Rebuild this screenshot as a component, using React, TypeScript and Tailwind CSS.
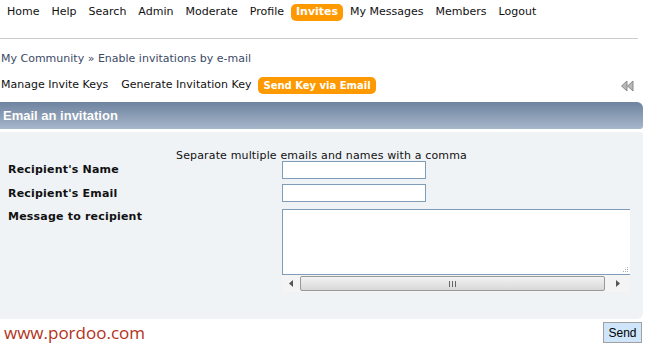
import React from "react";

const navItems = ["Home", "Help", "Search", "Admin", "Moderate", "Profile", "Invites", "My Messages", "Members", "Logout"];

export default function App() {
  return (
    <div className="w-[645px] h-[355px] bg-white overflow-hidden text-[11px] text-[#111]" style={{ fontFamily: '"DejaVu Sans", Verdana, sans-serif' }}>
      {/* Top nav */}
      <div className="flex items-center h-[23px] pl-[1px] pt-[1px]">
        {navItems.map((n) =>
          n === "Invites" ? (
            <span key={n} className="mx-[1px] px-[5px] h-[17px] flex items-center rounded-[5px] bg-[#ff9900] text-white font-bold">{n}</span>
          ) : (
            <span key={n} className="px-[6px]">{n}</span>
          )
        )}
      </div>
      <div className="mt-[15px] ml-0 w-[638px] h-px bg-[#cccccc]" />
      {/* breadcrumb */}
      <div className="mt-[13px] pl-[1px] text-[#3b4a66] h-[14px] leading-[14px]">
        My Community <span>»</span> Enable invitations by e-mail
      </div>
      {/* sub nav */}
      <div className="mt-[11px] flex items-center h-[17px] pr-[11px]">
        <span className="pl-[1px] pr-[7px]">Manage Invite Keys</span>
        <span className="px-[6px]">Generate Invitation Key</span>
        <span className="ml-[1px] px-[5px] h-[17px] flex items-center rounded-[5px] bg-[#ff9900] text-white font-bold text-[10px]">Send Key via Email</span>
        <div className="flex-1" />
        <svg width="14" height="12" viewBox="0 0 14 12">
          <path d="M7 1 L1.5 6 L7 11 Z" fill="#b8b8b8" stroke="#8a8a8a" strokeWidth="1" />
          <path d="M13 1 L7.5 6 L13 11 Z" fill="#b8b8b8" stroke="#8a8a8a" strokeWidth="1" />
        </svg>
      </div>
      {/* header */}
      <div className="mt-[8px] w-[643px] h-[27px] rounded-tr-[6px] rounded-br-[3px] bg-gradient-to-b from-[#6e83a0] to-[#a8b7ca] flex items-center pl-[3px]">
        <span className="text-white font-bold text-[13px]" style={{ fontFamily: '"Liberation Sans", Arial, sans-serif', textShadow: "0 0 1px #8090a8" }}>Email an invitation</span>
      </div>
      {/* body */}
      <div className="mt-[3px] w-[643px] h-[187px] bg-[#eff3f6] rounded-br-[6px] rounded-tr-[3px] pt-[17px]">
        <div className="text-center leading-[14px] -mt-[0px] tracking-[0.15px]">Separate multiple emails and names with a comma</div>
        <div className="flex -mt-[2px]">
          <div className="w-[282px] pl-[8px] font-bold tracking-[0.2px]">
            <div className="h-[14px] mt-[2px] leading-[14px]">Recipient's Name</div>
            <div className="h-[14px] mt-[10px] leading-[14px]">Recipient's Email</div>
            <div className="h-[14px] mt-[9px] leading-[14px]">Message to recipient</div>
          </div>
          <div className="flex flex-col">
            <div className="w-[144px] h-[18px] bg-white border border-[#7f9db9]" />
            <div className="w-[144px] h-[18px] mt-[5px] bg-white border border-[#7f9db9]" />
            <div className="mt-[7px] w-[348px] h-[66px] bg-white border border-r-0 border-[#7f9db9] relative">
              <svg className="absolute right-[1px] bottom-[1px]" width="6" height="6" viewBox="0 0 6 6">
                <rect x="4" y="0" width="1" height="1" fill="#aaa" />
                <rect x="2" y="2" width="1" height="1" fill="#aaa" />
                <rect x="4" y="2" width="1" height="1" fill="#aaa" />
                <rect x="0" y="4" width="1" height="1" fill="#aaa" />
                <rect x="2" y="4" width="1" height="1" fill="#aaa" />
                <rect x="4" y="4" width="1" height="1" fill="#aaa" />
              </svg>
            </div>
            {/* fake scrollbar */}
            <div className="w-[348px] h-[17px] bg-[#f4f4f4] flex items-center">
              <div className="w-[18px] flex justify-center">
                <svg width="4" height="7" viewBox="0 0 4 7"><path d="M4 0 L0 3.5 L4 7 Z" fill="#555" /></svg>
              </div>
              <div className="w-[305px] h-[15px] rounded-[2px] border border-[#999] bg-gradient-to-b from-[#f3f3f3] to-[#d8d8d8] flex items-center justify-center">
                <svg width="7" height="6" viewBox="0 0 7 6">
                  <rect x="0" y="0" width="1" height="6" fill="#666" />
                  <rect x="3" y="0" width="1" height="6" fill="#666" />
                  <rect x="6" y="0" width="1" height="6" fill="#666" />
                </svg>
              </div>
              <div className="flex-1 flex justify-center">
                <svg width="4" height="7" viewBox="0 0 4 7"><path d="M0 0 L4 3.5 L0 7 Z" fill="#555" /></svg>
              </div>
            </div>
          </div>
        </div>
      </div>
      {/* footer */}
      <div className="flex items-start justify-between">
        <span className="pl-[4px] mt-[1px] text-[17px] text-[#b3321a]" style={{ fontFamily: '"Open Sans", sans-serif' }}>www.pordoo.com</span>
        <button className="mr-[3px] mt-[3px] w-[39px] h-[21px] bg-[#cfe6fa] border border-[#a0a0a0] text-[12px] text-black" style={{ fontFamily: '"Liberation Sans", Arial, sans-serif' }}>Send</button>
      </div>
    </div>
  );
}
